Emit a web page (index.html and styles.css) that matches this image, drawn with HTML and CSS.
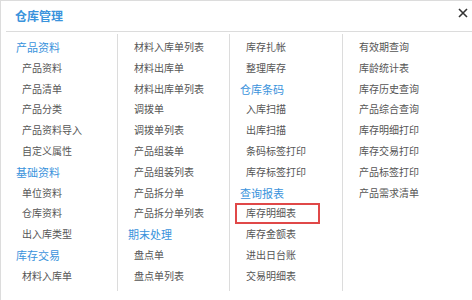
FILE: index.html
```html
<!DOCTYPE html>
<html lang="zh-CN">
<head>
  <meta charset="UTF-8">
  <title>仓库管理</title>
  <link rel="stylesheet" href="styles.css">
</head>
<body>

  <div class="panel">
    <div class="panel-head">
      <span class="panel-title">仓库管理</span>
      <svg class="close-icon" width="10" height="10" viewBox="0 0 10 10">
        <path d="M1 1 L9 9 M9 1 L1 9" stroke="#333" stroke-width="1.6" fill="none"/>
      </svg>
    </div>

    <div class="menu-grid">
      <div class="menu-col">
        <div class="group">产品资料</div>
        <div class="item">产品资料</div>
        <div class="item">产品清单</div>
        <div class="item">产品分类</div>
        <div class="item">产品资料导入</div>
        <div class="item">自定义属性</div>
        <div class="group">基础资料</div>
        <div class="item">单位资料</div>
        <div class="item">仓库资料</div>
        <div class="item">出入库类型</div>
        <div class="group">库存交易</div>
        <div class="item">材料入库单</div>
      </div>
      <div class="menu-col">
        <div class="item">材料入库单列表</div>
        <div class="item">材料出库单</div>
        <div class="item">材料出库单列表</div>
        <div class="item">调拨单</div>
        <div class="item">调拨单列表</div>
        <div class="item">产品组装单</div>
        <div class="item">产品组装列表</div>
        <div class="item">产品拆分单</div>
        <div class="item">产品拆分单列表</div>
        <div class="group">期末处理</div>
        <div class="item">盘点单</div>
        <div class="item">盘点单列表</div>
      </div>
      <div class="menu-col">
        <div class="item">库存扎帐</div>
        <div class="item">整理库存</div>
        <div class="group">仓库条码</div>
        <div class="item">入库扫描</div>
        <div class="item">出库扫描</div>
        <div class="item">条码标签打印</div>
        <div class="item">库存标签打印</div>
        <div class="group">查询报表</div>
        <div class="item marked">库存明细表</div>
        <div class="item">库存金额表</div>
        <div class="item">进出日台账</div>
        <div class="item">交易明细表</div>
      </div>
      <div class="menu-col">
        <div class="item">有效期查询</div>
        <div class="item">库龄统计表</div>
        <div class="item">库存历史查询</div>
        <div class="item">产品综合查询</div>
        <div class="item">库存明细打印</div>
        <div class="item">库存交易打印</div>
        <div class="item">产品标签打印</div>
        <div class="item">产品需求清单</div>
      </div>
    </div>
  </div>

</body>
</html>
```

FILE: styles.css
```css
body {
  margin: 0;
  background-color: white;
  font-family: "Noto Sans CJK SC", "Noto Sans", sans-serif;
}
.panel {
  height: 300px;
  box-sizing: border-box;
  border-top: 1px solid #dcdcdc;
  border-left: 1px solid #dcdcdc;
}
.panel-head {
  display: flex;
  align-items: center;
  justify-content: space-between;
  height: 30px;
  margin-left: 5px;
  padding: 0 4px 0 9px;
  border-bottom: 1px solid #dcdcdc;
}
.panel-title {
  color: #3a93dc;
  font-size: 12px;
  font-weight: bold;
  margin-top: -2px;
}
.close-icon {
  margin-top: -6px;
}
.menu-grid {
  display: grid;
  grid-template-columns: 111px 112px 113px 1fr;
  margin-left: 5px;
  padding-top: 2px;
}
.menu-col {
  border-left: 1px solid #dcdcdc;
  padding: 3px 0 0 10px;
  height: 254px;
}
.menu-col:first-child {
  border-left: none;
}
.group {
  height: 20.8px;
  line-height: 20.8px;
  color: #3a93dc;
  font-size: 11px;
}
.item {
  height: 20.8px;
  line-height: 20.8px;
  padding-left: 6px;
  color: #555;
  font-size: 10px;
  white-space: nowrap;
}
.item.marked {
  width: 85px;
  box-sizing: border-box;
  margin-left: -5px;
  padding-left: 11px;
  outline: 2px solid #e04848;
  outline-offset: -2px;
}
```
